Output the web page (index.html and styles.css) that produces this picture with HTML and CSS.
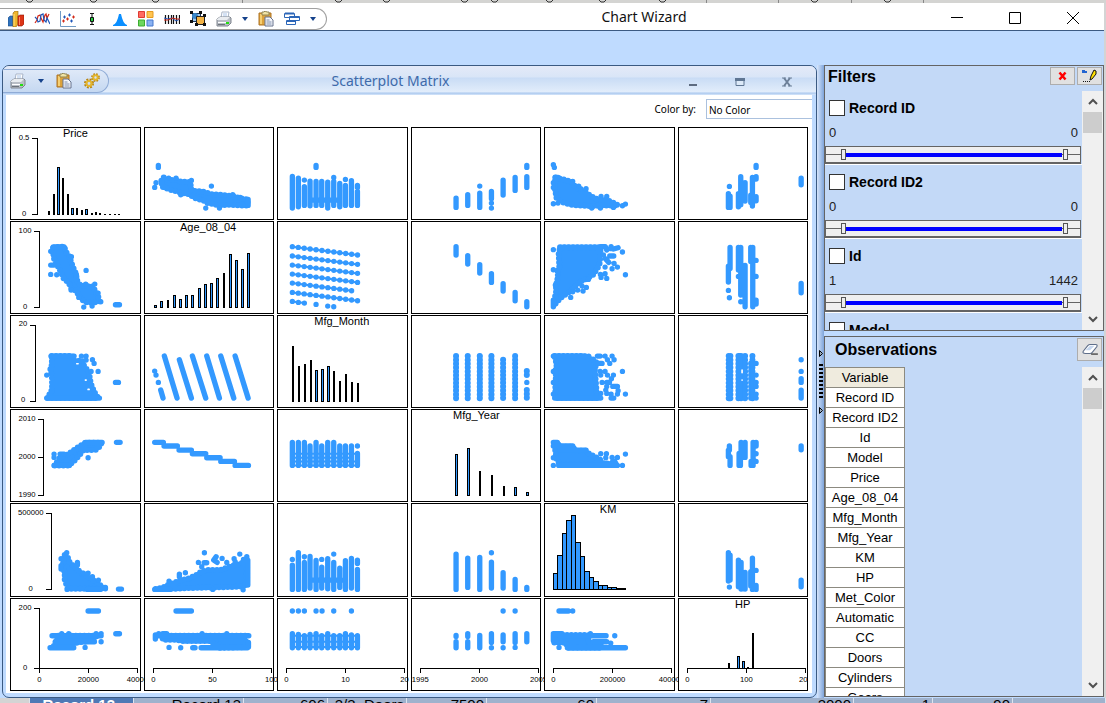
FILE: index.html
```html
<!DOCTYPE html>
<html lang="en">
<head>
<meta charset="utf-8">
<title>Chart Wizard</title>
<link rel="stylesheet" href="styles.css">
</head>
<body>
<svg class="defs" aria-hidden="true">
  <defs>
    <symbol id="i-print" viewBox="0 0 16 16"><path d="M5 7l1-6h7l-1 6z" fill="#fff" stroke="#a9b5c8"/><path d="M7 3h4M7 5h4" stroke="#a9c4ea"/><path d="M1 8l3-2h10l1 1v5l-3 3H1z" fill="#b9bec6" stroke="#80868f"/><path d="M1 8l3-2h10l-3 3H1z" fill="#e9ecf0"/><path d="M2 11.500h8" stroke="#fff"/><path d="M2 13.500h7" stroke="#6d737b"/><path d="M10 11h3v2h-3z" fill="#22dd11"/></symbol>
    <symbol id="i-paste" viewBox="0 0 16 16"><path d="M1 2h12v12H1z" fill="#dca23b" stroke="#ad7225"/><path d="M2 3h2v10H2z" fill="#f6cf72"/><path d="M4 1h2l1-1 2 1h2v3H4z" fill="#f1e4a5" stroke="#8f8454"/><path d="M7 6h5l3 3v6H7z" fill="#f3f5fa" stroke="#66738e"/><path d="M8.500 9h3M8.500 11h5M8.500 13h5" stroke="#7e8fae"/></symbol>
    <symbol id="i-gear" viewBox="0 0 16 16"><g fill="none"><circle cx="5" cy="10.500" r="3.800" stroke="#b8830f" stroke-width="2.400" stroke-dasharray="1.800 1.200"/><circle cx="5" cy="10.500" r="2.500" stroke="#e3b52c" stroke-width="2.200"/><circle cx="11.500" cy="4.500" r="3.400" stroke="#b8830f" stroke-width="2" stroke-dasharray="1.600 1.100"/><circle cx="11.500" cy="4.500" r="2.200" stroke="#e3b52c" stroke-width="2"/></g></symbol>
    <symbol id="i-drop" viewBox="0 0 6 4"><path d="M0 0h6L3 4z" fill="#15428b"/></symbol>
    <symbol id="i-up" viewBox="0 0 10 7"><path d="M1 6l4-4 4 4" fill="none" stroke="#505050" stroke-width="2"/></symbol>
    <symbol id="i-down" viewBox="0 0 10 7"><path d="M1 1l4 4 4-4" fill="none" stroke="#505050" stroke-width="2"/></symbol>
  </defs>
</svg>

<div class="back-top" aria-hidden="true">
  <svg width="1106" height="3"><g fill="none" stroke="#333"><path d="M26 0l2 2h3l2-2M90 0l2 2h3l2-2M152 0l2 2h3l2-2M335 0l2 2h3l2-2M383 0l2 2h3l2-2M461 0l2 2h3l2-2M491 0l2 2h3l2-2M546 0l2 2h3l2-2M599 0l2 2h3l2-2M659 0l2 2h3l2-2M811 0l2 2h3l2-2M884 0l2 2h3l2-2"/><path stroke="#888" d="M242.500 0v3M706.500 0v3M778.500 0v3M851.500 0v3M923.500 0v3"/></g></svg>
</div>

<header class="titlebar">
  <div class="tools">
    <button class="tool" aria-label="Bar chart"><svg viewBox="0 0 16 16"><path d="M0 7l2-2h3v10H0z" fill="#2f72bd" stroke="#1c4a85" stroke-width=".6"/><path d="M5 2l2-2h3v13l-2 3H5z" fill="#eeb52d" stroke="#8a6110" stroke-width=".6"/><path d="M6 3v12" stroke="#ffe37c"/><path d="M10 5l2-1h4v9l-2 2h-4z" fill="#dc3416" stroke="#8e1604" stroke-width=".6"/><path d="M11.500 6v8" stroke="#ff8760"/></svg></button>
    <button class="tool" aria-label="Line chart"><svg viewBox="0 0 16 16"><path d="M1 12l2-3 1-4 2-1 1 3 2 4 2-7 1-1 1 4 2-4" fill="none" stroke="#d42a18" stroke-width="1.200"/><path d="M1 6l2 2 1 3 2-1 1-6 2-1 1 6 2 2 1-4 2 4 1 2" fill="none" stroke="#1f56b8" stroke-width="1.200"/></svg></button>
    <button class="tool" aria-label="Scatterplot"><svg viewBox="0 0 16 16"><path d="M.5 0v15.500H16" fill="none" stroke="#6f9ac5"/><path d="M3 6h3M4.500 4.500v3M8 4h3M9.500 2.500v3M10 10h3M11.500 8.500v3" stroke="#1f56b8"/><path d="M2 10h3M3.500 8.500v3M6 8h3M7.500 6.500v3M12 6h3M13.500 4.500v3" stroke="#d42a18"/></svg></button>
    <button class="tool" aria-label="Boxplot"><svg viewBox="0 0 16 16"><path d="M4 2.500h4M6 2v12M4 13.500h4" stroke="#111"/><path d="M4.500 6.500h3v4h-3z" fill="#21ce3c" stroke="#111"/></svg></button>
    <button class="tool" aria-label="Histogram"><svg viewBox="0 0 16 16"><path d="M1 15v-1q4-1 6-11h2q2 10 6 11v1z" fill="#0b8fff"/></svg></button>
    <button class="tool" aria-label="Scatterplot matrix"><svg viewBox="0 0 16 16"><path d="M.5.500h6v6h-6z" fill="#ff6a61" stroke="#df3b33"/><path d="M9 .500h6v6H9z" fill="#ffc450" stroke="#e59a20"/><path d="M.5 9h6v6h-6z" fill="#6ed75d" stroke="#3dac31"/><path d="M9 9h6v6H9z" fill="#8ab2f2" stroke="#4778cd"/></svg></button>
    <button class="tool" aria-label="Parallel coordinates"><svg viewBox="0 0 16 16"><path d="M1.500 4v9M4.500 4v9M7.500 4v9M9.500 4v9M12.500 4v9M15.500 4v9" stroke="#111" stroke-width="1.200"/><path d="M0 7l4 1 4-1 4 3 4-2" fill="none" stroke="#1f56b8"/><path d="M0 9h4l5-2 3 1h4" fill="none" stroke="#d42a18"/></svg></button>
    <button class="tool" aria-label="Variable chart"><svg viewBox="0 0 16 16"><path d="M2.500 2.500h8v8h-8z" fill="#9ec8ed" stroke="#1c3658"/><circle cx="5" cy="5" r="3" fill="#3b88ca"/><path d="M6.500 5.500h8v8h-8z" fill="#f4b344" stroke="#222"/><path d="M0 0h3v3H0zM9 0h3v3H9zM0 9h3v3H0zM5 12h3v3H5zM13 12h3v3h-3zM13 3h3v3h-3z" fill="#111"/></svg></button>
    <button class="tool" aria-label="Print"><svg><use href="#i-print"/></svg></button>
    <button class="drop" aria-label="Print options"><svg><use href="#i-drop"/></svg></button>
    <button class="tool" aria-label="Paste"><svg><use href="#i-paste"/></svg></button>
    <button class="tool" aria-label="Windows"><svg viewBox="0 0 16 16"><g fill="#fff" stroke="#2c66b8"><path d="M.5 2.500h10v4H.5zM5.500 5.500h10v4h-10zM2.500 9.500h9v4h-9z"/><path d="M1 2.500h9M6 6h9M3 10h8" stroke-width="2"/></g></svg></button>
    <button class="drop" aria-label="Window options"><svg><use href="#i-drop"/></svg></button>
  </div>
  <h1 class="app-title">Chart Wizard</h1>
  <div class="win-controls">
    <button aria-label="Minimize"><svg viewBox="0 0 14 14"><path d="M1 6.500h12" stroke="#000"/></svg></button>
    <button aria-label="Maximize"><svg viewBox="0 0 14 14"><path d="M1.500 1.500h11v11h-11z" fill="none" stroke="#000"/></svg></button>
    <button aria-label="Close"><svg viewBox="0 0 14 14"><path d="M1 1l12 12M13 1L1 13" stroke="#000"/></svg></button>
  </div>
</header>
<div class="ribbon"></div>

<main class="workspace">
  <section class="chart-window">
    <div class="chart-head">
      <div class="chart-tools">
        <button class="tool" aria-label="Print chart"><svg><use href="#i-print"/></svg></button>
        <button class="drop" aria-label="Print chart options"><svg><use href="#i-drop"/></svg></button>
        <button class="tool" aria-label="Paste chart"><svg><use href="#i-paste"/></svg></button>
        <button class="tool" aria-label="Chart options"><svg><use href="#i-gear"/></svg></button>
      </div>
      <h2 class="chart-title">Scatterplot Matrix</h2>
      <div class="chart-controls">
        <button aria-label="Minimize chart"><svg viewBox="0 0 10 10"><path d="M1 8h8" stroke="#5d6b80" stroke-width="2"/></svg></button>
        <button aria-label="Restore chart"><svg viewBox="0 0 10 10"><path d="M1 2.500h8v6H1z" fill="#dce9f8" stroke="#5f7693"/><path d="M0 2.500h10" stroke="#5f7693" stroke-width="3"/></svg></button>
        <button aria-label="Close chart"><svg viewBox="0 0 10 10"><path d="M2 1l6 8M8 1L2 9" stroke="#6d8099" stroke-width="2"/><path d="M0 1h4M6 1h4M0 9h4M6 9h4" stroke="#6d8099"/></svg></button>
      </div>
    </div>
    <div class="chart-body">
      <div class="color-row">
        <label for="color-by">Color by:</label>
        <select id="color-by"><option>No Color</option></select>
      </div>
      <div class="matrix">
        <!-- Price -->
        <div class="cell"><svg viewBox="33 24 385 273"><text class="name" x="226" y="50">Price</text><path class="axis" d="M96 55H112V283H96"/><text class="tick" x="72" y="59">0.5</text><text class="tick" x="72" y="287">0</text><path class="bar" d="M147 285V274M162 285V222M189 285V175M204 285V222M231 285V265M246 285V270M275 285V279M288 285V276M301 285V279M316 285V282M330 285V282M345 285V282M358 285V282"/><path class="box" d="M172 142h6V283h-6zM214 265h6V283h-6zM256 268h6V283h-6z"/></svg></div>
        <div class="cell"><svg viewBox="435 24 385 273"><path class="area" d="M484 182L490 172 506 180 528 180 540 184 570 186 575 212 606 214 632 222 660 224 698 228 722 235 742 238V256H727L690 254 659 256 620 248 612 242 586 234 565 222 545 218 508 208 486 200Z"/><path class="pts" d="M475 136v6M468 188h0M464 202h0M634 198h0M617 264h0M542 224h0M658 264h0M506 174h0M528 174h0M574 181h0M698 224h0M720 232h0M744 238v18"/></svg></div>
        <div class="cell"><svg viewBox="9 24 385 273"><path class="pts" d="M52 169V264M70 174V260M88 180h0M88 200V256M105 183V257M123 184V256M140 184V256M158 186V264M176 172h0M176 184V256M194 190V260M211 178h0M211 196V256M229 182V256M247 196V202M247 214V256M123 136v6M105 240H194"/></svg></div>
        <div class="cell"><svg viewBox="408 24 385 273"><path class="pts" d="M540 234V262M575 224V256M611 198h0M611 219V262M646 214V236M646 249h0M646 264h0M681 180V225M717 172V211M752 170V202M752 136v6"/></svg></div>
        <div class="cell"><svg viewBox="15 24 385 273"><path class="area" d="M46 172L62 176 96 186 104 198 118 210 136 216 150 226 166 236 200 240 225 250 234 256H198L155 258 100 255 72 248 50 236 44 202Z"/><path class="pts" d="M40 134h0M43 142h0M40 188h0M40 202h0M40 251h0M54 249h0M46 172h8M98 184h0M116 198h0M122 206h0M138 206h0M183 229h0M200 229h0M155 264h0M181 264h0M220 262h0M247 257h0M256 252h0"/></svg></div>
        <div class="cell"><svg viewBox="414 24 385 273"><path class="pts" d="M565 199h0M562 221V262M567 228V262M592 221V260M599 170V254M612 188V243M634 172V258M629 225V247M645 136v6M645 170V177M645 230V242M780 174V194"/></svg></div>

        <!-- Age_08_04 -->
        <div class="cell"><svg viewBox="33 306 385 273"><path class="axis" d="M103 334H118V562H103"/><text class="tick" x="75" y="338">100</text><text class="tick" x="75" y="566">0</text><path class="area" d="M160 382L192 380 198 396 208 410 218 440 228 462 230 480 240 495 255 498 281 500 284 512 293 525 298 543 278 548 254 546 240 532 228 512 214 505 205 486 192 478 182 455 170 432 160 412 160 395Z"/><path class="pts" d="M152 394h0M158 384h0M164 381h28M152 435h10M152 463h0M170 464h0M258 451h0M251 561h0M276 558h0M346 554h12M302 545h0M294 519h0M284 492h0M236 532h0M214 410h0M213 510h0M257 492h0M229 464v14"/></svg></div>
        <div class="cell"><svg viewBox="435 306 385 273"><text class="name" x="624" y="332">Age_08_04</text><path class="bar" d="M504 563V541M672 563V460"/><path class="box" d="M463 556h6V562h-6zM481 544h6V562h-6zM520 526h6V562h-6zM538 538h6V562h-6zM556 526h6V562h-6zM574 526h6V562h-6zM595 505h6V562h-6zM613 493h6V562h-6zM631 490h6V562h-6zM649 475h6V562h-6zM688 403h6V562h-6zM706 421h6V562h-6zM724 448h6V562h-6zM742 400h6V562h-6z"/></svg></div>
        <div class="cell"><svg viewBox="9 306 385 273"><path class="thin" d="M52 380L247 405M52 408L247 433M52 435L247 460M52 462L247 487M52 489L229 512M52 517L247 542M52 544L88 549"/><path class="pts beads" d="M52 380L248 405M52 408L248 433M52 435L248 460M52 462L248 487M52 489L230 512M52 517L248 542"/><path class="pts" d="M52 544h0M70 547h0M88 549h0M123 553h0M158 558h0M176 560h0"/></svg></div>
        <div class="cell"><svg viewBox="408 306 385 273"><path class="pts" d="M540 380V405M575 407V432M611 434V459M646 461V487M681 491V513M717 517V542M752 545V560"/></svg></div>
        <div class="cell"><svg viewBox="15 306 385 273"><path class="area" d="M60 382H180L182 400 178 435 160 463 140 476 118 486 102 503 84 518 66 530 48 548 42 558V540L48 520V495L54 470 52 450 58 440 56 402Z"/><path class="pts" d="M62 382H180M40 389h0M40 449h0M40 540V560M46 495h0M247 396h0M256 464h0M232 441h0M216 446h0M222 430h0M195 441h0M196 416L206 427M209 408h12M182 380h14L200 390M213 380v6M220 387L234 383M181 463h0M183 472h0M195 461h0M200 475h0M139 502h0M129 513h0M92 532h0M126 498h0M113 510h0M98 515h0M190 405h0M145 478h0"/></svg></div>
        <div class="cell"><svg viewBox="414 306 385 273"><path class="pts" d="M567 382V445M562 438V486M562 511h0M565 533h0M592 382V450M599 382V450M592 469h0M599 460V525M612 436V560M599 545h0M629 382V424M635 382V560M645 421h0M645 469h0M645 540v12M780 490V518"/></svg></div>

        <!-- Mfg_Month -->
        <div class="cell"><svg viewBox="33 18 385 273"><path class="axis" d="M91 45H106V273H91"/><text class="tick" x="69" y="49">20</text><text class="tick" x="69" y="277">0</text><path class="area" d="M155 138H218L224 152H248L252 168 266 185 272 220 282 245 294 264H142L150 250 156 238V205L150 172 156 165Z"/><path class="pts" d="M153 138H222M140 195h0M140 264H298M244 138h0M258 138h0M258 150h0M277 149h0M282 160h0M273 184h0M294 184h0M346 217h9"/><path class="hole" d="M230 161h4M256 210h2M264 238h3"/></svg></div>
        <div class="cell"><svg viewBox="435 18 385 273"><path class="pts" d="M464 183h0M468 195h0M475 217h0M482 240L489 264M493 138L531 264M538 149L574 264M577 138L617 264M620 138L658 264M662 138L701 264M705 138L744 264"/></svg></div>
        <div class="cell"><svg viewBox="9 18 385 273"><text class="name" x="200" y="44">Mfg_Month</text><path class="bar" d="M54 276V108M72 276V168M90 276V162M108 276V150M177 276V183M195 276V213M213 276V192M231 276V216M249 276V219"/><path class="box" d="M121 181h6V274h-6zM139 178h6V274h-6zM157 169h6V274h-6z"/></svg></div>
        <div class="cell"><svg viewBox="408 18 385 273"><path class="pts rough" d="M540 138V266M575 138V266M611 138V266M646 138V266M681 149V266M717 138V266M752 183V195M752 240V266"/><path class="pts" d="M752 217h0M611 138V264M646 138V264"/><path class="thick" d="M540 138V264M575 138V264M681 149V264M717 138V264M752 184V194M752 242V264"/></svg></div>
        <div class="cell"><svg viewBox="15 18 385 273"><path class="area" d="M44 138H133L146 144 164 150 170 160 164 175 170 250 176 264H46L46 252V217L48 200 46 184 50 165Z"/><path class="pts" d="M40 138H133M40 184h0M40 217h0M40 252h0M44 264H182M146 138h0M172 138h8M195 138h0M216 138h0M222 149h0M202 149h0M209 160h0M172 160h14M180 184h0M195 184h0M247 184h0M182 195h0M202 195h0M220 195h0M214 206h0M186 217h0M200 217h8M218 229h14M200 229h0M197 240h0M234 242h0M200 250h0M213 252h0M232 252h0M256 252h0M213 264h8M182 250h0"/></svg></div>
        <div class="cell"><svg viewBox="414 18 385 273"><path class="pts rough" d="M563 138V266M568 138V266M592 138V266M600 138V266M612 138V266M634 138V266M630 160V266"/><path class="thick" d="M565 138V264M594 138V264M610 138V264M634 138V264"/><path class="pts" d="M645 160h0M645 195h0M645 217h0M645 229h0M645 252h0M645 264h0M780 149h0M780 184h0M780 206v11M780 240v24"/><path class="hole" d="M603 180v8M603 210h0"/></svg></div>

        <!-- Mfg_Year -->
        <div class="cell"><svg viewBox="33 300 385 273"><path class="axis" d="M115 328H130V556H115M115 442H130"/><text class="tick" x="81" y="332">2010</text><text class="tick" x="81" y="446">2000</text><text class="tick" x="81" y="560">1990</text><path class="area" d="M164 466H206L220 455 238 435 250 420H286L301 408 304 398H256L240 408 222 420 205 432 180 442Z"/><path class="pts" d="M162 432h0M162 442h0M180 432h12M162 466H208M256 397H306M264 443h0M349 397h11"/></svg></div>
        <div class="cell"><svg viewBox="435 300 385 273"><path class="pts" d="M464 397H490M492 408H532M537 420H574M577 431H617M620 443H660M662 454H703M705 466H745"/></svg></div>
        <div class="cell"><svg viewBox="9 300 385 273"><path class="pts" d="M52 397V466M70 397V466M88 397V466M105 408V466M123 397V466M140 408V466M158 397V466M176 397V466M194 408V466M211 408V466M229 408V466M247 408h0M247 430V466"/><path class="thin" d="M52 431H247M52 443H229M52 454H247M52 466H247"/></svg></div>
        <div class="cell"><svg viewBox="408 300 385 273"><text class="name" x="601" y="326">Mfg_Year</text><path class="bar" d="M612 558V484M648 558V496M684 558V529"/><path class="box" d="M538 433h6V556h-6zM574 415h6V556h-6zM715 532h6V556h-6zM751 547h6V556h-6z"/></svg></div>
        <div class="cell"><svg viewBox="15 300 385 273"><path class="area" d="M44 399H52L60 410H98L106 422H136L150 433 165 440 182 450 190 460H225L230 464H60L50 448 44 410Z"/><path class="pts" d="M40 397h12M40 408H98M60 420H138M56 466H232M40 443h0M40 466h0M182 431h0M199 431h0M256 432h0M232 442h0M216 442h0M197 443h0M218 454h6M247 466h0"/></svg></div>
        <div class="cell"><svg viewBox="414 300 385 273"><path class="pts" d="M565 408V420M562 420V440M567 440V466M594 430V466M598 430V466M600 397V442M612 397V442M636 397V466M630 454V466M645 397v11M645 431h0M645 454h0M780 408V419"/></svg></div>

        <!-- KM -->
        <div class="cell"><svg viewBox="33 12 385 273"><path class="axis" d="M139 40H154V268H139"/><text class="tick" x="92" y="44">500000</text><text class="tick" x="92" y="272">0</text><path class="area" d="M194 165L204 174 210 190 226 202 242 218 260 228 276 238 296 250 304 260 314 264 300 266H204L194 240V215L186 205Z"/><path class="pts" d="M200 158h0M183 176h0M183 197v10M232 187v8M250 219h0M264 219h0M277 230h0M295 240h0M316 262v4M201 268h0M262 268h38M355 267h9"/></svg></div>
        <div class="cell"><svg viewBox="435 12 385 273"><path class="area" d="M467 267L490 262 510 252 540 242 570 234 590 224 605 214 625 210H660L690 199 710 194 740 184V253L720 260 640 262 560 264 500 267Z"/><path class="pts" d="M464 268H510M743 180V255M613 158h0M595 187h0M612 188h8M605 200h0M648 170L641 180 651 187M666 175h0M680 187h0M702 176h0M705 185h0M719 162h0M740 170v10M730 178h0M538 222v8M556 218h0M507 243h0M638 268h0M729 269h0"/></svg></div>
        <div class="cell"><svg viewBox="9 12 385 273"><path class="pts" d="M52 178h0M52 195V268M70 158V268M88 170h0M88 187V268M105 169V264M123 181V268M140 178h0M140 201V264M158 176V266M176 162h0M176 187V268M194 204V262M211 182V268M229 175V264M247 180V190M247 208V268M105 240H200"/></svg></div>
        <div class="cell"><svg viewBox="408 12 385 273"><path class="pts" d="M540 162V268M575 174V262M611 172V268M646 158h0M646 186V264M681 218V264M717 238V268M752 262V268"/></svg></div>
        <div class="cell"><svg viewBox="15 12 385 273"><text class="name" x="204" y="38">KM</text><path class="box" d="M40 220h12V268h-12zM52 166h15V268h-15zM67 100h12V268h-12zM79 61h15V268h-15zM94 46h12V268h-12zM106 127h15V268h-15zM121 169h12V268h-12zM133 214h15V268h-15zM148 232h12V268h-12zM160 244h15V268h-15zM175 256h12V268h-12zM187 256h15V268h-15zM202 262h12V268h-12zM214 262h15V268h-15zM229 265h27V268h-27z"/></svg></div>
        <div class="cell"><svg viewBox="414 12 385 273"><path class="pts" d="M562 158V243M567 165V240M565 261h0M592 180V260M600 187V267M612 217V267M634 174V268M629 215V258M645 211h0M645 256V268M780 240V260"/></svg></div>

        <!-- HP -->
        <div class="cell"><svg viewBox="33 294 385 273"><path class="axis" d="M103 322H118V502M103 502H412V517M118 502V517M265 502V517"/><text class="tick" x="75" y="326">200</text><text class="tick" x="75" y="506">0</text><text class="tick" x="118" y="542">0</text><text class="tick" x="265" y="542">20000</text><text class="tick" x="412" y="542">40000</text><path class="area" d="M175 404H290L278 418 250 422 222 426 208 438H160L168 420Z"/><path class="pts" d="M264 330H295M156 404H303M166 422H283M150 440H221M185 398h0M206 398h0M288 398h0M303 398h0M303 422h0M255 439h0M347 398h11"/></svg></div>
        <div class="cell"><svg viewBox="435 294 385 273"><path class="axis" d="M460 517V502H814V517M637 502V517"/><text class="tick" x="460" y="542">0</text><text class="tick" x="637" y="542">50</text><text class="tick" x="814" y="542">100</text><path class="area" d="M488 404H740V406L670 407 660 412 670 421H742V438L660 440 650 432 630 420H545L530 416 488 416Z"/><path class="pts" d="M528 330H574M466 402v12M470 404H746M476 398h0M488 398h12M606 398h0M680 398h0M507 439h0M542 440h0M578 440h7M603 440H742M745 424v14"/></svg></div>
        <div class="cell"><svg viewBox="9 294 385 273"><path class="axis" d="M34 517V502H388V517M211 502V517"/><text class="tick" x="34" y="542">0</text><text class="tick" x="211" y="542">10</text><text class="tick" x="388" y="542">20</text><path class="pts" d="M52 330h0M70 330h0M88 330h0M123 330h0M141 330h0M176 330h0M229 330h0M52 398V440M70 400V440M88 404V440M105 400V440M123 398V440M140 404V440M158 398V440M176 404V440M194 404V440M211 398V440M229 402V440M247 404V440"/><path class="thin" d="M52 404H247M52 422H247M52 438H247"/></svg></div>
        <div class="cell"><svg viewBox="408 294 385 273"><path class="axis" d="M433 517V502H787V517M610 502V517"/><text class="tick" x="433" y="542">1995</text><text class="tick" x="610" y="542">2000</text><text class="tick" x="787" y="542">2005</text><path class="pts" d="M540 403v3M540 422V440M575 398V406M575 422V440M611 403V440M646 398V424M646 440h0M681 330h0M681 402V422M681 440h0M717 330h0M717 398V424M717 439h0M752 398V422"/></svg></div>
        <div class="cell"><svg viewBox="15 294 385 273"><path class="axis" d="M40 517V502H394V517M217 502V517"/><text class="tick" x="40" y="542">0</text><text class="tick" x="217" y="542">200000</text><text class="tick" x="394" y="542">400000</text><path class="area" d="M42 402H145V425L180 428 185 440H85L75 424H42Z"/><path class="pts" d="M57 330H85M98 330h0M40 398H66M40 402v16M60 404H198M151 398h0M224 404h0M160 422H200M212 426h0M57 439h0M82 440H256"/></svg></div>
        <div class="cell last"><svg viewBox="414 294 385 273"><text class="name" x="605" y="320">HP</text><path class="axis" d="M439 517V502H793V517M616 502V517"/><text class="tick" x="439" y="542">0</text><text class="tick" x="616" y="542">100</text><text class="tick" x="793" y="542">200</text><path class="bar" d="M564 502V487M622 502V498M636 502V397"/><path class="box" d="M589 466h6V501h-6zM604 481h6V501h-6z"/></svg></div>
      </div>
    </div>
  </section>

  <div class="splitter" aria-hidden="true">
    <svg viewBox="0 0 4 7"><path d="M.5.500L3.500 3.500l-3 3z" fill="#9ab" stroke="#000"/></svg>
    <span class="grip"></span>
    <svg viewBox="0 0 4 7"><path d="M.5.500L3.500 3.500l-3 3z" fill="#9ab" stroke="#000"/></svg>
  </div>

  <aside class="side">
    <section class="panel filters">
      <div class="panel-head">
        <h2>Filters</h2>
        <button class="small" aria-label="Clear filters"><svg viewBox="0 0 16 16"><path d="M4.500 4.500l6 7M10.500 4.500l-6 7" stroke="#f00" stroke-width="2.500"/></svg></button>
        <button class="small" aria-label="Edit filters"><svg viewBox="0 0 16 16"><path d="M0 2h3v1h2v2H0z" fill="#2365d1"/><path d="M8 12l1-4 3-6 2 1v3l-4 5z" fill="#ffe000" stroke="#111"/><path d="M1 13.500h1M3 13.500h1M5 13.500h1M7 13.500h1" stroke="#111"/></svg></button>
      </div>
      <div class="scroller">
        <div class="filter-list">
          <div class="filter">
            <label class="pick"><input type="checkbox">Record ID</label>
            <div class="bounds"><span>0</span><span>0</span></div>
            <div class="range"><input type="range" value="6" aria-label="Record ID minimum"><input type="range" value="95" aria-label="Record ID maximum"></div>
          </div>
          <div class="filter">
            <label class="pick"><input type="checkbox">Record ID2</label>
            <div class="bounds"><span>0</span><span>0</span></div>
            <div class="range"><input type="range" value="6" aria-label="Record ID2 minimum"><input type="range" value="95" aria-label="Record ID2 maximum"></div>
          </div>
          <div class="filter">
            <label class="pick"><input type="checkbox">Id</label>
            <div class="bounds"><span>1</span><span>1442</span></div>
            <div class="range"><input type="range" value="6" aria-label="Id minimum"><input type="range" value="95" aria-label="Id maximum"></div>
          </div>
          <div class="filter">
            <label class="pick"><input type="checkbox">Model</label>
          </div>
        </div>
        <div class="scrollbar"><button aria-label="Scroll filters up"><svg><use href="#i-up"/></svg></button><span class="thumb"></span><button aria-label="Scroll filters down"><svg><use href="#i-down"/></svg></button></div>
      </div>
    </section>
    <section class="panel observations">
      <div class="panel-head">
        <h2>Observations</h2>
        <button class="small tall" aria-label="Erase"><svg viewBox="0 0 16 16"><path d="M2 10l4-5q1-1 2-1h5q2 0 1 2l-4 5q-1 1-2 1H4q-3 0-2-2z" fill="#fff" stroke="#5f6f8a"/><path d="M4 9l4-4h4l-4 4z" fill="#c6d7ee"/><path d="M9 12.500h6" stroke="#222"/></svg></button>
      </div>
      <div class="scroller">
        <div class="table-wrap">
          <table>
            <thead><tr><th>Variable</th></tr></thead>
            <tbody>
              <tr><td>Record ID</td></tr><tr><td>Record ID2</td></tr><tr><td>Id</td></tr><tr><td>Model</td></tr><tr><td>Price</td></tr><tr><td>Age_08_04</td></tr><tr><td>Mfg_Month</td></tr><tr><td>Mfg_Year</td></tr><tr><td>KM</td></tr><tr><td>HP</td></tr><tr><td>Met_Color</td></tr><tr><td>Automatic</td></tr><tr><td>CC</td></tr><tr><td>Doors</td></tr><tr><td>Cylinders</td></tr><tr><td>Gears</td></tr>
            </tbody>
          </table>
        </div>
        <div class="scrollbar"><button aria-label="Scroll observations up"><svg><use href="#i-up"/></svg></button><span class="thumb"></span><button aria-label="Scroll observations down"><svg><use href="#i-down"/></svg></button></div>
      </div>
    </section>
  </aside>
</main>

<div class="back-row">
  <span></span><span class="sel">Record 13</span><span>Record 13</span><span>606</span><span>2/3_Doors</span><span>7500</span><span>60</span><span>7</span><span>2000</span><span>1</span><span>90</span><span></span>
</div>
</body>
</html>
```
FILE: styles.css
```css
* { box-sizing: border-box; }
body {
  margin: 0;
  height: 100vh;
  display: flex;
  flex-direction: column;
  overflow: hidden;
  background: #d4d4d4;
  font-family: "Liberation Sans", Arial, sans-serif;
  font-size: 13px;
  color: #000;
}
h1, h2 { margin: 0; }
button { border: 0; padding: 0; background: none; font: inherit; display: flex; align-items: center; justify-content: center; }
svg { display: block; }
.defs { width: 0; height: 0; position: absolute; }

.back-top { flex: none; height: 3px; background: #d4d4d2; overflow: hidden; }

.titlebar {
  flex: none;
  height: 28px;
  margin-right: 2px;
  display: grid;
  grid-template-columns: 1fr auto 1fr;
  background: #fff;
  border-bottom: 1px solid #3b5a82;
}
.tools {
  justify-self: start;
  display: flex;
  align-items: center;
  height: 22px;
  margin-top: 5px;
  padding: 0 5px 0 3px;
  border: 1px solid #a0a0a0;
  border-left: 0;
  border-radius: 0 11px 11px 0;
}
.tool { width: 26px; height: 20px; }
.tool svg { width: 16px; height: 16px; }
.drop { width: 16px; height: 20px; }
.drop svg { width: 6px; height: 4px; }
.app-title { padding-left: 184px; font: 400 14px/27px "Noto Sans", "Open Sans", sans-serif; color: #111; }
.win-controls { justify-self: end; display: flex; align-items: center; padding: 3px 24px 0 0; gap: 44px; }
.win-controls svg { width: 14px; height: 14px; }
.ribbon { flex: none; height: 34px; margin-right: 2px; background: #bfdbff; }

.workspace { flex: 1; min-height: 0; display: flex; margin-right: 2px; background: #bfdbff; }
.chart-window {
  flex: 1;
  min-width: 0;
  margin-left: 2px;
  display: flex;
  flex-direction: column;
  padding: 0 4px 4px 3px;
  border: 1px solid #3b5a82;
  border-radius: 7px;
  background: #bfdbff;
  overflow: hidden;
}
.chart-head {
  flex: none;
  height: 29px;
  margin: 0 -4px 0 -3px;
  display: grid;
  grid-template-columns: 1fr auto 1fr;
  align-items: center;
  background: linear-gradient(#e4eaf8 0, #d9e5f7 11px, #c9dcf5 12px, #e2edfb 26px, #a9c7ee 27px, #d7e6fa 29px);
}
.chart-tools {
  justify-self: start;
  display: flex;
  gap: 2px;
  height: 24px;
  align-items: center;
  padding: 0 3px 0 2px;
  border: 1px solid #8fabd6;
  border-left: 0;
  border-radius: 0 12px 12px 0;
  background: linear-gradient(#dfe9f8, #c5d8f1);
}
.chart-title { padding-right: 38px; font: 400 14px/28px "Noto Sans", "Open Sans", sans-serif; color: #3e6aaa; }
.chart-controls { justify-self: end; display: flex; gap: 37px; padding: 2px 24px 0 0; }
.chart-controls svg { width: 10px; height: 10px; }
.chart-body { flex: 1; min-height: 0; padding: 4px 0 0 4px; background: #fff; overflow: hidden; }
.color-row {
  display: flex;
  justify-content: flex-end;
  align-items: center;
  gap: 10px;
  height: 20px;
  margin-bottom: 8px;
  font: 10px/20px "Noto Sans", "Open Sans", sans-serif;
}
.color-row select {
  appearance: none;
  width: 106px;
  height: 20px;
  padding: 0 2px;
  border: 1px solid #abc1de;
  border-right: 0;
  border-radius: 0;
  background: #fff;
  font: inherit;
  color: #000;
}

.matrix { display: grid; grid-template-columns: repeat(6, 1fr); gap: 1px 3px; margin-right: 4px; }
.cell { min-width: 0; border: 1px solid #000; background: #fff; position: relative; }
.cell svg { width: 100%; height: auto; overflow: visible; }
.cell.last { overflow: hidden; }
.axis { fill: none; stroke: #000; stroke-width: 3; shape-rendering: crispEdges; }
.bar { fill: none; stroke: #000; stroke-width: 6; shape-rendering: crispEdges; }
.box { fill: #3399ff; stroke: #000; stroke-width: 3; shape-rendering: crispEdges; }
.area { fill: #3399ff; stroke: #3399ff; stroke-width: 18; stroke-dasharray: 0 13; stroke-linejoin: round; stroke-linecap: round; }
.pts { fill: none; stroke: #3399ff; stroke-width: 16; stroke-linejoin: round; stroke-linecap: round; }
.beads { stroke-dasharray: 0 17.900; }
.rough { stroke-width: 18; stroke-dasharray: 0 11.500; }
.thick { fill: none; stroke: #3399ff; stroke-width: 14; }
.thin { fill: none; stroke: #3399ff; stroke-width: 6; }
.hole { fill: none; stroke: #fff; stroke-width: 5; stroke-linecap: round; }
.name { font-size: 33px; text-anchor: middle; }
.tick { font-size: 23px; text-anchor: middle; }

.splitter {
  flex: none;
  width: 7px;
  display: flex;
  flex-direction: column;
  align-items: center;
  justify-content: center;
  gap: 7px;
  background: linear-gradient(90deg, #d6e5fb, #7ea4da);
}
.splitter svg { width: 4px; height: 7px; }
.grip { width: 4px; height: 36px; background: repeating-linear-gradient(#000 0 2px, transparent 2px 4px); }

.side { flex: none; width: 280px; display: flex; flex-direction: column; gap: 5px; padding-bottom: 1px; }
.panel { display: flex; flex-direction: column; min-height: 0; background: #c3d9f7; border: 1px solid #646464; overflow: hidden; }
.filters { flex: 266 1 0; }
.observations { flex: 362 1 0; }
.panel-head { flex: none; display: flex; align-items: flex-start; gap: 2px; height: 25px; padding: 1px 1px 0 3px; }
.panel-head h2 { flex: 1; font-size: 16px; line-height: 20px; }
.small { width: 25px; height: 18px; border: 1px solid #adadad; background: #e1e1e1; }
.small svg { width: 16px; height: 16px; }
.tall { height: 23px; }
.tall svg { width: 18px; height: 18px; }
.observations .panel-head { height: 30px; padding-left: 10px; }
.observations h2 { line-height: 23px; }
.scroller { flex: 1; min-height: 0; display: flex; }
.filter-list { flex: 1; min-width: 0; overflow: hidden; }
.filter { height: 74px; padding-top: 9px; border-bottom: 1px solid #fff; }
.pick { display: flex; align-items: center; gap: 4px; height: 16px; padding-left: 4px; font-size: 14px; font-weight: 700; }
.pick input { appearance: none; width: 16px; height: 16px; margin: 0; border: 1px solid #333; background: #fff; }
.bounds { display: flex; justify-content: space-between; height: 30px; padding: 0 4px; line-height: 33px; color: #222; }
.range {
  display: grid;
  height: 18px;
  margin-right: 1px;
  border: 1px solid #646464;
  border-bottom-width: 2px;
  background: linear-gradient(#0000ff, #0000ff) center 6px / calc(100% - 36px) 4px no-repeat,
    linear-gradient(#646464, #646464) 0 7px / 100% 1px no-repeat, #efefef;
}
.range input { grid-area: 1 / 1; appearance: none; width: 100%; height: 15px; margin: 0; background: none; pointer-events: none; }
.range input::-webkit-slider-thumb { appearance: none; width: 5px; height: 11px; border: 1px solid #555; background: #eee; pointer-events: auto; }
.scrollbar { flex: none; width: 21px; display: flex; flex-direction: column; align-items: center; background: #f0f0f0; }
.scrollbar button { width: 20px; height: 21px; }
.scrollbar svg { width: 10px; height: 7px; }
.thumb { width: 19px; height: 21px; margin-bottom: auto; background: #cdcdcd; }
.table-wrap { flex: 1; min-width: 0; overflow: hidden; }
table { border-collapse: collapse; width: 80px; background: #fff; }
th, td { height: 20px; padding: 0; border: 1px solid #8c8a80; font-weight: 400; text-align: center; line-height: 19px; white-space: nowrap; }
th { background: #efebde; }

.back-row {
  flex: none;
  height: 5px;
  display: grid;
  grid-template-columns: 30fr 104fr 110fr 84fr 79fr 80fr 110fr 114fr 143fr 79fr 80fr 93fr;
  overflow: hidden;
  background: #9fb2cd;
  font-size: 15px;
  line-height: 13px;
}
.back-row span { min-width: 0; height: 15px; padding-right: 2px; text-align: right; border-right: 1px solid #dde4ee; white-space: nowrap; }
.back-row span:first-child { background: #d4d4d4; }
.back-row .sel { padding-right: 18px; background: #4f79b5; color: #fff; font-weight: 700; }
```
